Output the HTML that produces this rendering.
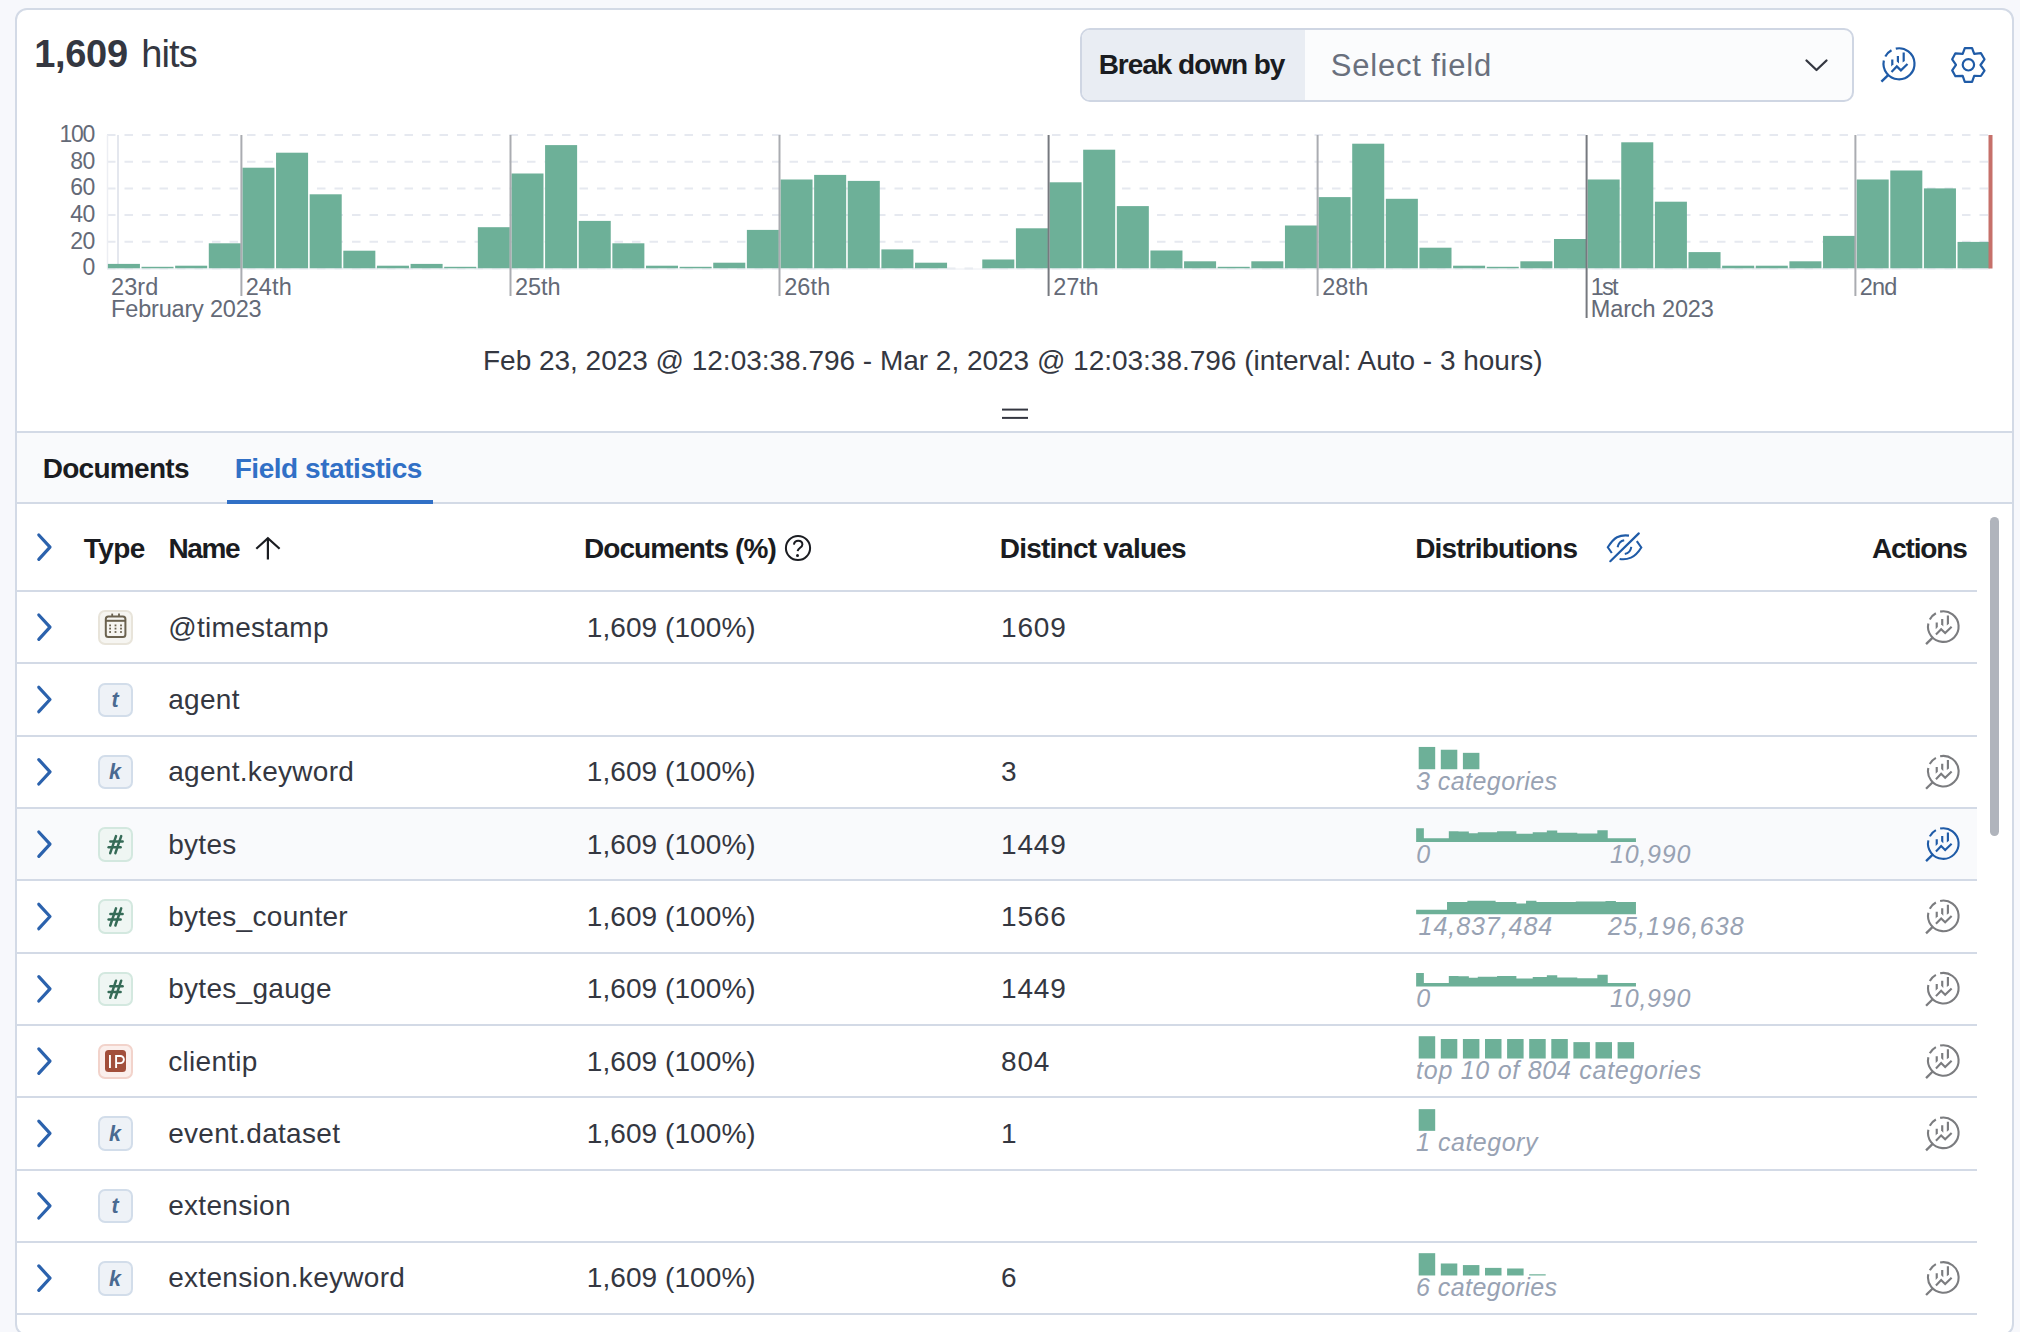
<!DOCTYPE html>
<html><head><meta charset="utf-8"><style>
*{box-sizing:border-box;margin:0;padding:0}
html,body{width:2020px;height:1332px;overflow:hidden;background:#f7f8fc;font-family:"Liberation Sans",sans-serif;color:#343741}
.a{position:absolute}
.t{position:absolute;white-space:nowrap}
.panel{position:absolute;left:15px;top:8px;width:1999px;height:1328px;border:2px solid #d3dae6;border-radius:12px;background:#fff}
svg{position:absolute;left:0;top:0}
</style></head>
<body>
<div class="panel"></div>
<div class="a" style="left:1080px;top:28px;width:774px;height:74px;border:2px solid #cfd6e3;border-radius:10px;background:#fbfcfd;overflow:hidden"></div>
<div class="a" style="left:1082px;top:30px;width:223px;height:70px;background:#e9edf3;border-radius:8px 0 0 8px"></div>
<div class="a" style="left:17px;top:431px;width:1995px;height:2px;background:#d3dae6"></div>
<div class="a" style="left:17px;top:433px;width:1995px;height:69px;background:#f9fafc"></div>
<div class="a" style="left:17px;top:502px;width:1995px;height:2px;background:#d3dae6"></div>
<div class="a" style="left:227px;top:500px;width:206px;height:4px;background:#3170c6"></div>
<div class="a" style="left:17px;top:590px;width:1960px;height:2px;background:#d3dae6"></div>
<div class="a" style="left:1990.2px;top:517px;width:8.9px;height:319px;background:#b0b4bc;border-radius:5px"></div>
<div class="a" style="left:17px;top:662px;width:1960px;height:2px;background:#d3dae6"></div>
<div class="a" style="left:98.3px;top:610.2px;width:34.3px;height:34.6px;background:#f6f5f1;border:2px solid #e8e4da;border-radius:7px"></div>
<div class="a" style="left:17px;top:735px;width:1960px;height:2px;background:#d3dae6"></div>
<div class="a" style="left:98.3px;top:682.52px;width:34.3px;height:34.6px;background:#eef2f7;border:2px solid #d2ddea;border-radius:7px"></div>
<div class="a" style="left:17px;top:807px;width:1960px;height:2px;background:#d3dae6"></div>
<div class="a" style="left:98.3px;top:754.84px;width:34.3px;height:34.6px;background:#eef2f7;border:2px solid #d2ddea;border-radius:7px"></div>
<div class="a" style="left:17px;top:809px;width:1960px;height:71px;background:#f9fafc"></div>
<div class="a" style="left:17px;top:879px;width:1960px;height:2px;background:#d3dae6"></div>
<div class="a" style="left:98.3px;top:827.1600000000001px;width:34.3px;height:34.6px;background:#eff6f3;border:2px solid #d3e8df;border-radius:7px"></div>
<div class="a" style="left:17px;top:952px;width:1960px;height:2px;background:#d3dae6"></div>
<div class="a" style="left:98.3px;top:899.48px;width:34.3px;height:34.6px;background:#eff6f3;border:2px solid #d3e8df;border-radius:7px"></div>
<div class="a" style="left:17px;top:1024px;width:1960px;height:2px;background:#d3dae6"></div>
<div class="a" style="left:98.3px;top:971.8px;width:34.3px;height:34.6px;background:#eff6f3;border:2px solid #d3e8df;border-radius:7px"></div>
<div class="a" style="left:17px;top:1096px;width:1960px;height:2px;background:#d3dae6"></div>
<div class="a" style="left:98.3px;top:1044.1200000000001px;width:34.3px;height:34.6px;background:#fbefec;border:2px solid #f2d3cb;border-radius:7px"></div>
<div class="a" style="left:104.6px;top:1050.3200000000002px;width:21.8px;height:22px;background:#a24f3b;border-radius:3.5px"></div>
<div class="a" style="left:17px;top:1169px;width:1960px;height:2px;background:#d3dae6"></div>
<div class="a" style="left:98.3px;top:1116.44px;width:34.3px;height:34.6px;background:#eef2f7;border:2px solid #d2ddea;border-radius:7px"></div>
<div class="a" style="left:17px;top:1241px;width:1960px;height:2px;background:#d3dae6"></div>
<div class="a" style="left:98.3px;top:1188.76px;width:34.3px;height:34.6px;background:#eef2f7;border:2px solid #d2ddea;border-radius:7px"></div>
<div class="a" style="left:17px;top:1313px;width:1960px;height:2px;background:#d3dae6"></div>
<div class="a" style="left:98.3px;top:1261.08px;width:34.3px;height:34.6px;background:#eef2f7;border:2px solid #d2ddea;border-radius:7px"></div>
<svg width="2020" height="1332">
<polyline points="1806.5,60.5 1816.5,70 1826.5,60.5" fill="none" stroke="#343741" stroke-width="2.3" stroke-linecap="round" stroke-linejoin="round"/>
<path d="M1895.78,48.64 A15.5,15.5 0 1 1 1883.84,60.58" fill="none" stroke="#1f5ba7" stroke-width="2.2"/>
<path d="M1885.31,56.52 A15.5,15.5 0 0 1 1891.49,50.24" fill="none" stroke="#1f5ba7" stroke-width="2.2"/>
<line x1="1881.40" y1="81.70" x2="1888.40" y2="74.80" stroke="#1f5ba7" stroke-width="2.4000000000000004"/>
<polygon points="1891.20,59.50 1893.40,59.50 1893.40,64.20 1891.20,66.40" fill="#1f5ba7"/>
<polygon points="1896.80,56.10 1899.00,56.10 1899.00,63.60 1896.80,61.40" fill="#1f5ba7"/>
<polygon points="1902.60,52.40 1904.80,52.40 1904.80,61.00 1902.60,62.60" fill="#1f5ba7"/>
<polyline points="1891.50,71.90 1896.80,66.40 1900.90,70.40 1907.50,64.00" fill="none" stroke="#1f5ba7" stroke-width="2.2" stroke-linejoin="miter"/>
<polygon points="1964.8,48.1 1972.1,48.1 1974.2,53.9 1980.9,53.1 1984.5,59.3 1980.5,65.0 1984.5,70.6 1980.9,76.0 1974.2,75.8 1972.1,81.9 1964.8,81.9 1962.7,75.8 1955.4,76.2 1952.2,70.4 1956.0,64.8 1952.2,59.3 1955.4,53.3 1962.7,53.9" fill="none" stroke="#1f5ba7" stroke-width="2.2" stroke-linejoin="round"/>
<circle cx="1968.4" cy="64.8" r="5.7" fill="none" stroke="#1f5ba7" stroke-width="2.2"/>
<line x1="107" y1="135.0" x2="1988" y2="135.0" stroke="#e6e9f0" stroke-width="2" stroke-dasharray="8.5 9"/>
<line x1="107" y1="161.7" x2="1988" y2="161.7" stroke="#e6e9f0" stroke-width="2" stroke-dasharray="8.5 9"/>
<line x1="107" y1="188.4" x2="1988" y2="188.4" stroke="#e6e9f0" stroke-width="2" stroke-dasharray="8.5 9"/>
<line x1="107" y1="215.1" x2="1988" y2="215.1" stroke="#e6e9f0" stroke-width="2" stroke-dasharray="8.5 9"/>
<line x1="107" y1="241.8" x2="1988" y2="241.8" stroke="#e6e9f0" stroke-width="2" stroke-dasharray="8.5 9"/>
<line x1="107" y1="268.5" x2="1988" y2="268.5" stroke="#e6e9f0" stroke-width="2" stroke-dasharray="8.5 9"/>
<line x1="107.5" y1="135.0" x2="107.5" y2="268.5" stroke="#eceef3" stroke-width="1.5"/>
<line x1="118" y1="135.0" x2="118" y2="268.5" stroke="#e4e7ee" stroke-width="2"/>
<rect x="107.90" y="263.90" width="32.03" height="4.60" fill="#6db098"/>
<rect x="141.53" y="266.80" width="32.03" height="1.70" fill="#6db098"/>
<rect x="175.16" y="265.70" width="32.03" height="2.80" fill="#6db098"/>
<rect x="208.79" y="243.30" width="32.03" height="25.20" fill="#6db098"/>
<rect x="242.42" y="167.70" width="32.03" height="100.80" fill="#6db098"/>
<rect x="276.05" y="152.70" width="32.03" height="115.80" fill="#6db098"/>
<rect x="309.68" y="194.30" width="32.03" height="74.20" fill="#6db098"/>
<rect x="343.31" y="250.70" width="32.03" height="17.80" fill="#6db098"/>
<rect x="376.94" y="265.70" width="32.03" height="2.80" fill="#6db098"/>
<rect x="410.57" y="263.90" width="32.03" height="4.60" fill="#6db098"/>
<rect x="444.20" y="266.80" width="32.03" height="1.70" fill="#6db098"/>
<rect x="477.83" y="227.20" width="32.03" height="41.30" fill="#6db098"/>
<rect x="511.46" y="173.50" width="32.03" height="95.00" fill="#6db098"/>
<rect x="545.09" y="145.10" width="32.03" height="123.40" fill="#6db098"/>
<rect x="578.72" y="220.90" width="32.03" height="47.60" fill="#6db098"/>
<rect x="612.35" y="243.30" width="32.03" height="25.20" fill="#6db098"/>
<rect x="645.98" y="265.70" width="32.03" height="2.80" fill="#6db098"/>
<rect x="679.61" y="266.80" width="32.03" height="1.70" fill="#6db098"/>
<rect x="713.24" y="262.70" width="32.03" height="5.80" fill="#6db098"/>
<rect x="746.87" y="229.90" width="32.03" height="38.60" fill="#6db098"/>
<rect x="780.50" y="179.50" width="32.03" height="89.00" fill="#6db098"/>
<rect x="814.13" y="174.90" width="32.03" height="93.60" fill="#6db098"/>
<rect x="847.76" y="180.90" width="32.03" height="87.60" fill="#6db098"/>
<rect x="881.39" y="249.40" width="32.03" height="19.10" fill="#6db098"/>
<rect x="915.02" y="262.70" width="32.03" height="5.80" fill="#6db098"/>
<rect x="982.28" y="259.50" width="32.03" height="9.00" fill="#6db098"/>
<rect x="1015.91" y="228.30" width="32.03" height="40.20" fill="#6db098"/>
<rect x="1049.54" y="182.30" width="32.03" height="86.20" fill="#6db098"/>
<rect x="1083.17" y="149.70" width="32.03" height="118.80" fill="#6db098"/>
<rect x="1116.80" y="206.10" width="32.03" height="62.40" fill="#6db098"/>
<rect x="1150.43" y="250.50" width="32.03" height="18.00" fill="#6db098"/>
<rect x="1184.06" y="261.30" width="32.03" height="7.20" fill="#6db098"/>
<rect x="1217.69" y="266.80" width="32.03" height="1.70" fill="#6db098"/>
<rect x="1251.32" y="261.30" width="32.03" height="7.20" fill="#6db098"/>
<rect x="1284.95" y="225.50" width="32.03" height="43.00" fill="#6db098"/>
<rect x="1318.58" y="197.10" width="32.03" height="71.40" fill="#6db098"/>
<rect x="1352.21" y="143.70" width="32.03" height="124.80" fill="#6db098"/>
<rect x="1385.84" y="198.80" width="32.03" height="69.70" fill="#6db098"/>
<rect x="1419.47" y="247.70" width="32.03" height="20.80" fill="#6db098"/>
<rect x="1453.10" y="265.70" width="32.03" height="2.80" fill="#6db098"/>
<rect x="1486.73" y="266.80" width="32.03" height="1.70" fill="#6db098"/>
<rect x="1520.36" y="261.30" width="32.03" height="7.20" fill="#6db098"/>
<rect x="1553.99" y="239.00" width="32.03" height="29.50" fill="#6db098"/>
<rect x="1587.62" y="179.50" width="32.03" height="89.00" fill="#6db098"/>
<rect x="1621.25" y="142.30" width="32.03" height="126.20" fill="#6db098"/>
<rect x="1654.88" y="201.70" width="32.03" height="66.80" fill="#6db098"/>
<rect x="1688.51" y="252.10" width="32.03" height="16.40" fill="#6db098"/>
<rect x="1722.14" y="265.70" width="32.03" height="2.80" fill="#6db098"/>
<rect x="1755.77" y="265.70" width="32.03" height="2.80" fill="#6db098"/>
<rect x="1789.40" y="261.30" width="32.03" height="7.20" fill="#6db098"/>
<rect x="1823.03" y="235.90" width="32.03" height="32.60" fill="#6db098"/>
<rect x="1856.66" y="179.50" width="32.03" height="89.00" fill="#6db098"/>
<rect x="1890.29" y="170.50" width="32.03" height="98.00" fill="#6db098"/>
<rect x="1923.92" y="188.40" width="32.03" height="80.10" fill="#6db098"/>
<rect x="1957.55" y="241.90" width="32.03" height="26.60" fill="#6db098"/>
<line x1="107" y1="269.0" x2="1990" y2="269.0" stroke="#eceef3" stroke-width="1"/>
<line x1="241.4" y1="135.0" x2="241.4" y2="296" stroke="#aaacb1" stroke-width="2"/>
<line x1="510.5" y1="135.0" x2="510.5" y2="296" stroke="#aaacb1" stroke-width="2"/>
<line x1="779.5" y1="135.0" x2="779.5" y2="296" stroke="#aaacb1" stroke-width="2"/>
<line x1="1048.6" y1="135.0" x2="1048.6" y2="296" stroke="#76797f" stroke-width="2"/>
<line x1="1317.6" y1="135.0" x2="1317.6" y2="296" stroke="#aaacb1" stroke-width="2"/>
<line x1="1586.6" y1="135.0" x2="1586.6" y2="318" stroke="#76797f" stroke-width="2"/>
<line x1="1855.4" y1="135.0" x2="1855.4" y2="296" stroke="#aaacb1" stroke-width="2"/>
<rect x="1988.5" y="135.0" width="4" height="133.5" fill="#c6706a"/>
<line x1="1002" y1="409.6" x2="1028" y2="409.6" stroke="#343741" stroke-width="2"/>
<line x1="1002" y1="417.9" x2="1028" y2="417.9" stroke="#343741" stroke-width="2"/>
<polyline points="38.8,535.0 50.0,547.2 38.8,559.4" fill="none" stroke="#2b62ad" stroke-width="3.2" stroke-linecap="round" stroke-linejoin="round"/>
<polyline points="256.3,548.7 267.9,538.2 279.6,548.7" fill="none" stroke="#1a1c21" stroke-width="2.2"/>
<line x1="267.9" y1="538.2" x2="267.9" y2="559.5" stroke="#1a1c21" stroke-width="2.2"/>
<circle cx="798" cy="548" r="12.1" fill="none" stroke="#1a1c21" stroke-width="2"/>
<path d="M793.9,544.6 C794.3,541.9 796.2,540.8 798.2,540.8 C800.6,540.8 802.4,542.3 802.4,544.5 C802.4,547.6 797.9,547.9 797.6,551.2" fill="none" stroke="#1a1c21" stroke-width="2"/>
<circle cx="797.5" cy="555.6" r="1.5" fill="#1a1c21"/>
<line x1="1610.3" y1="561.2" x2="1638.8" y2="533.4" stroke="#1f5ba7" stroke-width="2.2" stroke-linecap="round"/>
<path d="M1611.8,553 L1607.8,547.3 C1610.5,543 1613,539.3 1617,537.2 C1620.5,535.5 1624.5,535 1629,535.6" fill="none" stroke="#1f5ba7" stroke-width="2.1"/>
<path d="M1636.8,541.2 L1641.3,547.5 C1638.5,552 1635,556 1631,557.6 C1627,559.3 1623,559.7 1619.6,558.9" fill="none" stroke="#1f5ba7" stroke-width="2.1"/>
<path d="M1617.6,547.3 C1618.3,543.6 1620.5,540.8 1624.2,540.2" fill="none" stroke="#1f5ba7" stroke-width="2"/>
<path d="M1624.8,554.0 C1628.5,553.3 1630.8,550.5 1631.3,546.8" fill="none" stroke="#1f5ba7" stroke-width="2"/>
<polyline points="38.8,615.0 50.0,627.2 38.8,639.4" fill="none" stroke="#2b62ad" stroke-width="3.2" stroke-linecap="round" stroke-linejoin="round"/>
<rect x="105.8" y="616.4" width="19.6" height="20.6" rx="2.5" fill="none" stroke="#6b624f" stroke-width="2"/>
<line x1="105.8" y1="620.8" x2="125.4" y2="620.8" stroke="#6b624f" stroke-width="2"/>
<rect x="109.2" y="624.5" width="1.8" height="1.8" fill="#6b624f"/>
<rect x="109.2" y="627.7" width="1.8" height="1.8" fill="#6b624f"/>
<rect x="109.2" y="631.1" width="1.8" height="1.8" fill="#6b624f"/>
<rect x="114.6" y="624.5" width="1.8" height="1.8" fill="#6b624f"/>
<rect x="114.6" y="627.7" width="1.8" height="1.8" fill="#6b624f"/>
<rect x="114.6" y="631.1" width="1.8" height="1.8" fill="#6b624f"/>
<rect x="120.1" y="624.5" width="1.8" height="1.8" fill="#6b624f"/>
<rect x="120.1" y="627.7" width="1.8" height="1.8" fill="#6b624f"/>
<rect x="120.1" y="631.1" width="1.8" height="1.8" fill="#6b624f"/>
<line x1="112.2" y1="613.6" x2="112.2" y2="616.2" stroke="#6b624f" stroke-width="1.8"/>
<line x1="119" y1="613.6" x2="119" y2="616.2" stroke="#6b624f" stroke-width="1.8"/>
<path d="M1940.12,611.63 A15.3,15.3 0 1 1 1928.33,623.42" fill="none" stroke="#7b7c7f" stroke-width="2.1"/>
<path d="M1929.79,619.42 A15.3,15.3 0 0 1 1935.88,613.22" fill="none" stroke="#7b7c7f" stroke-width="2.1"/>
<line x1="1926.05" y1="644.14" x2="1932.91" y2="637.38" stroke="#7b7c7f" stroke-width="2.3000000000000003"/>
<polygon points="1935.66,622.39 1937.81,622.39 1937.81,626.99 1935.66,629.15" fill="#7b7c7f"/>
<polygon points="1941.14,619.05 1943.30,619.05 1943.30,626.40 1941.14,624.25" fill="#7b7c7f"/>
<polygon points="1946.83,615.43 1948.98,615.43 1948.98,623.86 1946.83,625.42" fill="#7b7c7f"/>
<polyline points="1935.95,634.54 1941.14,629.15 1945.16,633.07 1951.63,626.80" fill="none" stroke="#7b7c7f" stroke-width="2.1" stroke-linejoin="miter"/>
<polyline points="38.8,687.3 50.0,699.5 38.8,711.7" fill="none" stroke="#2b62ad" stroke-width="3.2" stroke-linecap="round" stroke-linejoin="round"/>
<polyline points="38.8,759.6 50.0,771.8 38.8,784.0" fill="none" stroke="#2b62ad" stroke-width="3.2" stroke-linecap="round" stroke-linejoin="round"/>
<rect x="1418.70" y="746.94" width="16.5" height="22.30" fill="#6db098"/>
<rect x="1440.80" y="749.74" width="16.5" height="19.50" fill="#6db098"/>
<rect x="1462.90" y="752.84" width="16.5" height="16.40" fill="#6db098"/>
<path d="M1940.12,756.27 A15.3,15.3 0 1 1 1928.33,768.06" fill="none" stroke="#7b7c7f" stroke-width="2.1"/>
<path d="M1929.79,764.06 A15.3,15.3 0 0 1 1935.88,757.86" fill="none" stroke="#7b7c7f" stroke-width="2.1"/>
<line x1="1926.05" y1="788.78" x2="1932.91" y2="782.02" stroke="#7b7c7f" stroke-width="2.3000000000000003"/>
<polygon points="1935.66,767.03 1937.81,767.03 1937.81,771.63 1935.66,773.79" fill="#7b7c7f"/>
<polygon points="1941.14,763.69 1943.30,763.69 1943.30,771.04 1941.14,768.89" fill="#7b7c7f"/>
<polygon points="1946.83,760.07 1948.98,760.07 1948.98,768.50 1946.83,770.06" fill="#7b7c7f"/>
<polyline points="1935.95,779.18 1941.14,773.79 1945.16,777.71 1951.63,771.44" fill="none" stroke="#7b7c7f" stroke-width="2.1" stroke-linejoin="miter"/>
<polyline points="38.8,832.0 50.0,844.2 38.8,856.4" fill="none" stroke="#2b62ad" stroke-width="3.2" stroke-linecap="round" stroke-linejoin="round"/>
<line x1="116" y1="836.1" x2="110.2" y2="853.2" stroke="#356b57" stroke-width="2.5" stroke-linecap="round"/>
<line x1="121.2" y1="836.1" x2="115.4" y2="853.2" stroke="#356b57" stroke-width="2.5" stroke-linecap="round"/>
<line x1="110.4" y1="841.6" x2="122.6" y2="841.6" stroke="#356b57" stroke-width="2.5" stroke-linecap="round"/>
<line x1="108.6" y1="847.3" x2="120.6" y2="847.3" stroke="#356b57" stroke-width="2.5" stroke-linecap="round"/>
<polygon points="1416.14,841.96 1416.14,828.30 1423.86,828.30 1423.86,838.25 1448.81,838.25 1448.81,831.27 1458.47,831.27 1458.47,831.56 1468.86,831.56 1468.86,833.20 1477.78,833.20 1477.78,832.16 1497.08,832.16 1497.08,831.27 1516.39,831.27 1516.39,833.79 1532.73,833.79 1532.73,832.31 1546.84,832.31 1546.84,830.52 1557.24,830.52 1557.24,832.75 1577.29,832.75 1577.29,833.49 1597.34,833.49 1597.34,830.23 1607.73,830.23 1607.73,838.25 1635.95,838.25 1635.95,841.96" fill="#6db098"/>
<path d="M1940.12,828.59 A15.3,15.3 0 1 1 1928.33,840.38" fill="none" stroke="#1f5ba7" stroke-width="2.1"/>
<path d="M1929.79,836.38 A15.3,15.3 0 0 1 1935.88,830.18" fill="none" stroke="#1f5ba7" stroke-width="2.1"/>
<line x1="1926.05" y1="861.10" x2="1932.91" y2="854.34" stroke="#1f5ba7" stroke-width="2.3000000000000003"/>
<polygon points="1935.66,839.35 1937.81,839.35 1937.81,843.95 1935.66,846.11" fill="#1f5ba7"/>
<polygon points="1941.14,836.01 1943.30,836.01 1943.30,843.36 1941.14,841.21" fill="#1f5ba7"/>
<polygon points="1946.83,832.39 1948.98,832.39 1948.98,840.82 1946.83,842.38" fill="#1f5ba7"/>
<polyline points="1935.95,851.50 1941.14,846.11 1945.16,850.03 1951.63,843.76" fill="none" stroke="#1f5ba7" stroke-width="2.1" stroke-linejoin="miter"/>
<polyline points="38.8,904.3 50.0,916.5 38.8,928.7" fill="none" stroke="#2b62ad" stroke-width="3.2" stroke-linecap="round" stroke-linejoin="round"/>
<line x1="116" y1="908.4" x2="110.2" y2="925.5" stroke="#356b57" stroke-width="2.5" stroke-linecap="round"/>
<line x1="121.2" y1="908.4" x2="115.4" y2="925.5" stroke="#356b57" stroke-width="2.5" stroke-linecap="round"/>
<line x1="110.4" y1="913.9" x2="122.6" y2="913.9" stroke="#356b57" stroke-width="2.5" stroke-linecap="round"/>
<line x1="108.6" y1="919.6" x2="120.6" y2="919.6" stroke="#356b57" stroke-width="2.5" stroke-linecap="round"/>
<polygon points="1416.14,914.28 1416.14,909.82 1447.03,909.82 1447.03,901.95 1467.38,901.95 1467.38,900.76 1495.60,900.76 1495.60,901.95 1516.39,901.95 1516.39,903.44 1526.05,903.44 1526.05,900.76 1536.44,900.76 1536.44,901.95 1575.80,901.95 1575.80,901.51 1605.50,901.51 1605.50,901.06 1615.90,901.06 1615.90,901.95 1635.95,901.95 1635.95,914.28" fill="#6db098"/>
<path d="M1940.12,900.91 A15.3,15.3 0 1 1 1928.33,912.70" fill="none" stroke="#7b7c7f" stroke-width="2.1"/>
<path d="M1929.79,908.70 A15.3,15.3 0 0 1 1935.88,902.50" fill="none" stroke="#7b7c7f" stroke-width="2.1"/>
<line x1="1926.05" y1="933.42" x2="1932.91" y2="926.66" stroke="#7b7c7f" stroke-width="2.3000000000000003"/>
<polygon points="1935.66,911.67 1937.81,911.67 1937.81,916.27 1935.66,918.43" fill="#7b7c7f"/>
<polygon points="1941.14,908.33 1943.30,908.33 1943.30,915.68 1941.14,913.53" fill="#7b7c7f"/>
<polygon points="1946.83,904.71 1948.98,904.71 1948.98,913.14 1946.83,914.70" fill="#7b7c7f"/>
<polyline points="1935.95,923.82 1941.14,918.43 1945.16,922.35 1951.63,916.08" fill="none" stroke="#7b7c7f" stroke-width="2.1" stroke-linejoin="miter"/>
<polyline points="38.8,976.6 50.0,988.8 38.8,1001.0" fill="none" stroke="#2b62ad" stroke-width="3.2" stroke-linecap="round" stroke-linejoin="round"/>
<line x1="116" y1="980.7" x2="110.2" y2="997.8" stroke="#356b57" stroke-width="2.5" stroke-linecap="round"/>
<line x1="121.2" y1="980.7" x2="115.4" y2="997.8" stroke="#356b57" stroke-width="2.5" stroke-linecap="round"/>
<line x1="110.4" y1="986.2" x2="122.6" y2="986.2" stroke="#356b57" stroke-width="2.5" stroke-linecap="round"/>
<line x1="108.6" y1="991.9" x2="120.6" y2="991.9" stroke="#356b57" stroke-width="2.5" stroke-linecap="round"/>
<polygon points="1416.14,986.60 1416.14,972.94 1423.86,972.94 1423.86,982.89 1448.81,982.89 1448.81,975.91 1458.47,975.91 1458.47,976.20 1468.86,976.20 1468.86,977.84 1477.78,977.84 1477.78,976.80 1497.08,976.80 1497.08,975.91 1516.39,975.91 1516.39,978.43 1532.73,978.43 1532.73,976.95 1546.84,976.95 1546.84,975.16 1557.24,975.16 1557.24,977.39 1577.29,977.39 1577.29,978.13 1597.34,978.13 1597.34,974.87 1607.73,974.87 1607.73,982.89 1635.95,982.89 1635.95,986.60" fill="#6db098"/>
<path d="M1940.12,973.23 A15.3,15.3 0 1 1 1928.33,985.02" fill="none" stroke="#7b7c7f" stroke-width="2.1"/>
<path d="M1929.79,981.02 A15.3,15.3 0 0 1 1935.88,974.82" fill="none" stroke="#7b7c7f" stroke-width="2.1"/>
<line x1="1926.05" y1="1005.74" x2="1932.91" y2="998.98" stroke="#7b7c7f" stroke-width="2.3000000000000003"/>
<polygon points="1935.66,983.99 1937.81,983.99 1937.81,988.59 1935.66,990.75" fill="#7b7c7f"/>
<polygon points="1941.14,980.65 1943.30,980.65 1943.30,988.00 1941.14,985.85" fill="#7b7c7f"/>
<polygon points="1946.83,977.03 1948.98,977.03 1948.98,985.46 1946.83,987.02" fill="#7b7c7f"/>
<polyline points="1935.95,996.14 1941.14,990.75 1945.16,994.67 1951.63,988.40" fill="none" stroke="#7b7c7f" stroke-width="2.1" stroke-linejoin="miter"/>
<polyline points="38.8,1048.9 50.0,1061.1 38.8,1073.3" fill="none" stroke="#2b62ad" stroke-width="3.2" stroke-linecap="round" stroke-linejoin="round"/>
<rect x="109.0" y="1055.02" width="1.9" height="13" fill="#ffffff"/>
<path d="M116.1,1068.02 V1055.97 H120.3 A3.55,3.55 0 0 1 120.3,1063.12 H116.1" fill="none" stroke="#ffffff" stroke-width="1.9"/>
<rect x="1418.70" y="1036.22" width="16.5" height="22.30" fill="#6db098"/>
<rect x="1440.80" y="1039.02" width="16.5" height="19.50" fill="#6db098"/>
<rect x="1462.90" y="1039.02" width="16.5" height="19.50" fill="#6db098"/>
<rect x="1485.00" y="1039.02" width="16.5" height="19.50" fill="#6db098"/>
<rect x="1507.10" y="1039.02" width="16.5" height="19.50" fill="#6db098"/>
<rect x="1529.20" y="1039.02" width="16.5" height="19.50" fill="#6db098"/>
<rect x="1551.30" y="1039.02" width="16.5" height="19.50" fill="#6db098"/>
<rect x="1573.40" y="1042.12" width="16.5" height="16.40" fill="#6db098"/>
<rect x="1595.50" y="1042.12" width="16.5" height="16.40" fill="#6db098"/>
<rect x="1617.60" y="1042.12" width="16.5" height="16.40" fill="#6db098"/>
<path d="M1940.12,1045.55 A15.3,15.3 0 1 1 1928.33,1057.34" fill="none" stroke="#7b7c7f" stroke-width="2.1"/>
<path d="M1929.79,1053.34 A15.3,15.3 0 0 1 1935.88,1047.14" fill="none" stroke="#7b7c7f" stroke-width="2.1"/>
<line x1="1926.05" y1="1078.06" x2="1932.91" y2="1071.30" stroke="#7b7c7f" stroke-width="2.3000000000000003"/>
<polygon points="1935.66,1056.31 1937.81,1056.31 1937.81,1060.91 1935.66,1063.07" fill="#7b7c7f"/>
<polygon points="1941.14,1052.97 1943.30,1052.97 1943.30,1060.32 1941.14,1058.17" fill="#7b7c7f"/>
<polygon points="1946.83,1049.35 1948.98,1049.35 1948.98,1057.78 1946.83,1059.34" fill="#7b7c7f"/>
<polyline points="1935.95,1068.46 1941.14,1063.07 1945.16,1066.99 1951.63,1060.72" fill="none" stroke="#7b7c7f" stroke-width="2.1" stroke-linejoin="miter"/>
<polyline points="38.8,1121.2 50.0,1133.4 38.8,1145.6" fill="none" stroke="#2b62ad" stroke-width="3.2" stroke-linecap="round" stroke-linejoin="round"/>
<rect x="1418.70" y="1109.14" width="16.5" height="21.70" fill="#6db098"/>
<path d="M1940.12,1117.87 A15.3,15.3 0 1 1 1928.33,1129.66" fill="none" stroke="#7b7c7f" stroke-width="2.1"/>
<path d="M1929.79,1125.66 A15.3,15.3 0 0 1 1935.88,1119.46" fill="none" stroke="#7b7c7f" stroke-width="2.1"/>
<line x1="1926.05" y1="1150.38" x2="1932.91" y2="1143.62" stroke="#7b7c7f" stroke-width="2.3000000000000003"/>
<polygon points="1935.66,1128.63 1937.81,1128.63 1937.81,1133.23 1935.66,1135.39" fill="#7b7c7f"/>
<polygon points="1941.14,1125.29 1943.30,1125.29 1943.30,1132.64 1941.14,1130.49" fill="#7b7c7f"/>
<polygon points="1946.83,1121.67 1948.98,1121.67 1948.98,1130.10 1946.83,1131.66" fill="#7b7c7f"/>
<polyline points="1935.95,1140.78 1941.14,1135.39 1945.16,1139.31 1951.63,1133.04" fill="none" stroke="#7b7c7f" stroke-width="2.1" stroke-linejoin="miter"/>
<polyline points="38.8,1193.6 50.0,1205.8 38.8,1218.0" fill="none" stroke="#2b62ad" stroke-width="3.2" stroke-linecap="round" stroke-linejoin="round"/>
<polyline points="38.8,1265.9 50.0,1278.1 38.8,1290.3" fill="none" stroke="#2b62ad" stroke-width="3.2" stroke-linecap="round" stroke-linejoin="round"/>
<rect x="1418.70" y="1253.18" width="16.5" height="22.30" fill="#6db098"/>
<rect x="1440.80" y="1263.48" width="16.5" height="12.00" fill="#6db098"/>
<rect x="1462.90" y="1265.08" width="16.5" height="10.40" fill="#6db098"/>
<rect x="1485.00" y="1267.88" width="16.5" height="7.60" fill="#6db098"/>
<rect x="1507.10" y="1268.48" width="16.5" height="7.00" fill="#6db098"/>
<rect x="1529.20" y="1274.28" width="16.5" height="1.20" fill="#6db098"/>
<path d="M1940.12,1262.51 A15.3,15.3 0 1 1 1928.33,1274.30" fill="none" stroke="#7b7c7f" stroke-width="2.1"/>
<path d="M1929.79,1270.30 A15.3,15.3 0 0 1 1935.88,1264.10" fill="none" stroke="#7b7c7f" stroke-width="2.1"/>
<line x1="1926.05" y1="1295.02" x2="1932.91" y2="1288.26" stroke="#7b7c7f" stroke-width="2.3000000000000003"/>
<polygon points="1935.66,1273.27 1937.81,1273.27 1937.81,1277.87 1935.66,1280.03" fill="#7b7c7f"/>
<polygon points="1941.14,1269.93 1943.30,1269.93 1943.30,1277.28 1941.14,1275.13" fill="#7b7c7f"/>
<polygon points="1946.83,1266.31 1948.98,1266.31 1948.98,1274.74 1946.83,1276.30" fill="#7b7c7f"/>
<polyline points="1935.95,1285.42 1941.14,1280.03 1945.16,1283.95 1951.63,1277.68" fill="none" stroke="#7b7c7f" stroke-width="2.1" stroke-linejoin="miter"/>
</svg>
<div class="t" style="left:34.30px;top:33.10px;font-size:38px;line-height:42px;font-weight:bold;font-style:normal;color:#343741;letter-spacing:-0.344px;">1,609</div>
<div class="t" style="left:141.30px;top:33.10px;font-size:38px;line-height:42px;font-weight:normal;font-style:normal;color:#343741;letter-spacing:-0.909px;">hits</div>
<div class="t" style="left:1098.70px;top:48.90px;font-size:28px;line-height:31px;font-weight:bold;font-style:normal;color:#1a1c21;letter-spacing:-1.039px;">Break down by</div>
<div class="t" style="left:1330.70px;top:48.00px;font-size:31px;line-height:35px;font-weight:normal;font-style:normal;color:#69707d;letter-spacing:0.813px;">Select field</div>
<div class="t" style="left:59.50px;top:120.80px;font-size:23px;line-height:26px;font-weight:normal;font-style:normal;color:#646a77;letter-spacing:-1.332px;">100</div>
<div class="t" style="left:70.30px;top:147.50px;font-size:23px;line-height:26px;font-weight:normal;font-style:normal;color:#646a77;letter-spacing:-0.676px;">80</div>
<div class="t" style="left:70.30px;top:174.20px;font-size:23px;line-height:26px;font-weight:normal;font-style:normal;color:#646a77;letter-spacing:-0.676px;">60</div>
<div class="t" style="left:70.30px;top:200.90px;font-size:23px;line-height:26px;font-weight:normal;font-style:normal;color:#646a77;letter-spacing:-0.676px;">40</div>
<div class="t" style="left:70.30px;top:227.60px;font-size:23px;line-height:26px;font-weight:normal;font-style:normal;color:#646a77;letter-spacing:-0.676px;">20</div>
<div class="t" style="left:82.41px;top:254.30px;font-size:23px;line-height:26px;font-weight:normal;font-style:normal;color:#646a77;letter-spacing:0.000px;">0</div>
<div class="t" style="left:111.10px;top:274.00px;font-size:23.5px;line-height:26px;font-weight:normal;font-style:normal;color:#646a77;letter-spacing:0.026px;">23rd</div>
<div class="t" style="left:245.70px;top:274.00px;font-size:23.5px;line-height:26px;font-weight:normal;font-style:normal;color:#646a77;letter-spacing:0.090px;">24th</div>
<div class="t" style="left:515.10px;top:274.00px;font-size:23.5px;line-height:26px;font-weight:normal;font-style:normal;color:#646a77;letter-spacing:-0.077px;">25th</div>
<div class="t" style="left:784.20px;top:274.00px;font-size:23.5px;line-height:26px;font-weight:normal;font-style:normal;color:#646a77;letter-spacing:0.090px;">26th</div>
<div class="t" style="left:1053.20px;top:274.00px;font-size:23.5px;line-height:26px;font-weight:normal;font-style:normal;color:#646a77;letter-spacing:-0.077px;">27th</div>
<div class="t" style="left:1322.20px;top:274.00px;font-size:23.5px;line-height:26px;font-weight:normal;font-style:normal;color:#646a77;letter-spacing:0.090px;">28th</div>
<div class="t" style="left:1590.70px;top:274.00px;font-size:23.5px;line-height:26px;font-weight:normal;font-style:normal;color:#646a77;letter-spacing:-1.774px;">1st</div>
<div class="t" style="left:1859.70px;top:274.00px;font-size:23.5px;line-height:26px;font-weight:normal;font-style:normal;color:#646a77;letter-spacing:-0.799px;">2nd</div>
<div class="t" style="left:111.10px;top:296.00px;font-size:23.5px;line-height:26px;font-weight:normal;font-style:normal;color:#646a77;letter-spacing:-0.195px;">February 2023</div>
<div class="t" style="left:1590.70px;top:296.00px;font-size:23.5px;line-height:26px;font-weight:normal;font-style:normal;color:#646a77;letter-spacing:-0.100px;">March 2023</div>
<div class="t" style="left:483.00px;top:345.10px;font-size:28px;line-height:31px;font-weight:normal;font-style:normal;color:#343741;letter-spacing:-0.016px;">Feb 23, 2023 @ 12:03:38.796 - Mar 2, 2023 @ 12:03:38.796 (interval: Auto - 3 hours)</div>
<div class="t" style="left:42.70px;top:452.70px;font-size:28px;line-height:31px;font-weight:bold;font-style:normal;color:#1a1c21;letter-spacing:-0.707px;">Documents</div>
<div class="t" style="left:234.70px;top:452.70px;font-size:28px;line-height:31px;font-weight:bold;font-style:normal;color:#3170c6;letter-spacing:-0.454px;">Field statistics</div>
<div class="t" style="left:83.80px;top:533.10px;font-size:28px;line-height:31px;font-weight:bold;font-style:normal;color:#1a1c21;letter-spacing:-0.593px;">Type</div>
<div class="t" style="left:168.40px;top:533.10px;font-size:28px;line-height:31px;font-weight:bold;font-style:normal;color:#1a1c21;letter-spacing:-1.357px;">Name</div>
<div class="t" style="left:583.90px;top:533.10px;font-size:28px;line-height:31px;font-weight:bold;font-style:normal;color:#1a1c21;letter-spacing:-0.915px;">Documents (%)</div>
<div class="t" style="left:999.70px;top:533.10px;font-size:28px;line-height:31px;font-weight:bold;font-style:normal;color:#1a1c21;letter-spacing:-0.759px;">Distinct values</div>
<div class="t" style="left:1415.20px;top:533.10px;font-size:28px;line-height:31px;font-weight:bold;font-style:normal;color:#1a1c21;letter-spacing:-0.823px;">Distributions</div>
<div class="t" style="left:1872.00px;top:533.10px;font-size:28px;line-height:31px;font-weight:bold;font-style:normal;color:#1a1c21;letter-spacing:-1.163px;">Actions</div>
<div class="t" style="left:168.20px;top:611.60px;font-size:28px;line-height:31px;font-weight:normal;font-style:normal;color:#343741;letter-spacing:0.300px;">@timestamp</div>
<div class="t" style="left:586.80px;top:611.60px;font-size:28px;line-height:31px;font-weight:normal;font-style:normal;color:#343741;letter-spacing:0.072px;">1,609 (100%)</div>
<div class="t" style="left:1001.10px;top:611.60px;font-size:28px;line-height:31px;font-weight:normal;font-style:normal;color:#343741;letter-spacing:0.800px;">1609</div>
<div class="t" style="left:111.54px;top:688.12px;font-size:21.5px;line-height:24px;font-weight:bold;font-style:italic;color:#4a6a91;letter-spacing:0.000px;">t</div>
<div class="t" style="left:168.20px;top:683.92px;font-size:28px;line-height:31px;font-weight:normal;font-style:normal;color:#343741;letter-spacing:0.300px;">agent</div>
<div class="t" style="left:109.07px;top:760.44px;font-size:21.5px;line-height:24px;font-weight:bold;font-style:italic;color:#4a6a91;letter-spacing:0.000px;">k</div>
<div class="t" style="left:168.20px;top:756.24px;font-size:28px;line-height:31px;font-weight:normal;font-style:normal;color:#343741;letter-spacing:0.300px;">agent.keyword</div>
<div class="t" style="left:586.80px;top:756.24px;font-size:28px;line-height:31px;font-weight:normal;font-style:normal;color:#343741;letter-spacing:0.072px;">1,609 (100%)</div>
<div class="t" style="left:1001.10px;top:756.24px;font-size:28px;line-height:31px;font-weight:normal;font-style:normal;color:#343741;letter-spacing:0.000px;">3</div>
<div class="t" style="left:1416.10px;top:766.84px;font-size:25px;line-height:28px;font-weight:normal;font-style:italic;color:#98a2b3;letter-spacing:0.436px;">3 categories</div>
<div class="t" style="left:168.20px;top:828.56px;font-size:28px;line-height:31px;font-weight:normal;font-style:normal;color:#343741;letter-spacing:0.300px;">bytes</div>
<div class="t" style="left:586.80px;top:828.56px;font-size:28px;line-height:31px;font-weight:normal;font-style:normal;color:#343741;letter-spacing:0.072px;">1,609 (100%)</div>
<div class="t" style="left:1001.10px;top:828.56px;font-size:28px;line-height:31px;font-weight:normal;font-style:normal;color:#343741;letter-spacing:0.800px;">1449</div>
<div class="t" style="left:1416.30px;top:839.76px;font-size:25px;line-height:28px;font-weight:normal;font-style:italic;color:#98a2b3;letter-spacing:0.000px;">0</div>
<div class="t" style="left:1610.10px;top:839.76px;font-size:25px;line-height:28px;font-weight:normal;font-style:italic;color:#98a2b3;letter-spacing:0.745px;">10,990</div>
<div class="t" style="left:168.20px;top:900.88px;font-size:28px;line-height:31px;font-weight:normal;font-style:normal;color:#343741;letter-spacing:0.300px;">bytes_counter</div>
<div class="t" style="left:586.80px;top:900.88px;font-size:28px;line-height:31px;font-weight:normal;font-style:normal;color:#343741;letter-spacing:0.072px;">1,609 (100%)</div>
<div class="t" style="left:1001.10px;top:900.88px;font-size:28px;line-height:31px;font-weight:normal;font-style:normal;color:#343741;letter-spacing:0.800px;">1566</div>
<div class="t" style="left:1418.60px;top:912.08px;font-size:25px;line-height:28px;font-weight:normal;font-style:italic;color:#98a2b3;letter-spacing:0.942px;">14,837,484</div>
<div class="t" style="left:1608.05px;top:912.08px;font-size:25px;line-height:28px;font-weight:normal;font-style:italic;color:#98a2b3;letter-spacing:1.169px;">25,196,638</div>
<div class="t" style="left:168.20px;top:973.20px;font-size:28px;line-height:31px;font-weight:normal;font-style:normal;color:#343741;letter-spacing:0.300px;">bytes_gauge</div>
<div class="t" style="left:586.80px;top:973.20px;font-size:28px;line-height:31px;font-weight:normal;font-style:normal;color:#343741;letter-spacing:0.072px;">1,609 (100%)</div>
<div class="t" style="left:1001.10px;top:973.20px;font-size:28px;line-height:31px;font-weight:normal;font-style:normal;color:#343741;letter-spacing:0.800px;">1449</div>
<div class="t" style="left:1416.30px;top:984.40px;font-size:25px;line-height:28px;font-weight:normal;font-style:italic;color:#98a2b3;letter-spacing:0.000px;">0</div>
<div class="t" style="left:1610.10px;top:984.40px;font-size:25px;line-height:28px;font-weight:normal;font-style:italic;color:#98a2b3;letter-spacing:0.745px;">10,990</div>
<div class="t" style="left:168.20px;top:1045.52px;font-size:28px;line-height:31px;font-weight:normal;font-style:normal;color:#343741;letter-spacing:0.300px;">clientip</div>
<div class="t" style="left:586.80px;top:1045.52px;font-size:28px;line-height:31px;font-weight:normal;font-style:normal;color:#343741;letter-spacing:0.072px;">1,609 (100%)</div>
<div class="t" style="left:1001.10px;top:1045.52px;font-size:28px;line-height:31px;font-weight:normal;font-style:normal;color:#343741;letter-spacing:0.800px;">804</div>
<div class="t" style="left:1416.10px;top:1056.12px;font-size:25px;line-height:28px;font-weight:normal;font-style:italic;color:#98a2b3;letter-spacing:0.733px;">top 10 of 804 categories</div>
<div class="t" style="left:109.07px;top:1122.04px;font-size:21.5px;line-height:24px;font-weight:bold;font-style:italic;color:#4a6a91;letter-spacing:0.000px;">k</div>
<div class="t" style="left:168.20px;top:1117.84px;font-size:28px;line-height:31px;font-weight:normal;font-style:normal;color:#343741;letter-spacing:0.300px;">event.dataset</div>
<div class="t" style="left:586.80px;top:1117.84px;font-size:28px;line-height:31px;font-weight:normal;font-style:normal;color:#343741;letter-spacing:0.072px;">1,609 (100%)</div>
<div class="t" style="left:1001.10px;top:1117.84px;font-size:28px;line-height:31px;font-weight:normal;font-style:normal;color:#343741;letter-spacing:0.000px;">1</div>
<div class="t" style="left:1416.10px;top:1128.44px;font-size:25px;line-height:28px;font-weight:normal;font-style:italic;color:#98a2b3;letter-spacing:0.511px;">1 category</div>
<div class="t" style="left:111.54px;top:1194.36px;font-size:21.5px;line-height:24px;font-weight:bold;font-style:italic;color:#4a6a91;letter-spacing:0.000px;">t</div>
<div class="t" style="left:168.20px;top:1190.16px;font-size:28px;line-height:31px;font-weight:normal;font-style:normal;color:#343741;letter-spacing:0.300px;">extension</div>
<div class="t" style="left:109.07px;top:1266.68px;font-size:21.5px;line-height:24px;font-weight:bold;font-style:italic;color:#4a6a91;letter-spacing:0.000px;">k</div>
<div class="t" style="left:168.20px;top:1262.48px;font-size:28px;line-height:31px;font-weight:normal;font-style:normal;color:#343741;letter-spacing:0.300px;">extension.keyword</div>
<div class="t" style="left:586.80px;top:1262.48px;font-size:28px;line-height:31px;font-weight:normal;font-style:normal;color:#343741;letter-spacing:0.072px;">1,609 (100%)</div>
<div class="t" style="left:1001.10px;top:1262.48px;font-size:28px;line-height:31px;font-weight:normal;font-style:normal;color:#343741;letter-spacing:0.000px;">6</div>
<div class="t" style="left:1416.10px;top:1273.08px;font-size:25px;line-height:28px;font-weight:normal;font-style:italic;color:#98a2b3;letter-spacing:0.436px;">6 categories</div>
</body></html>
